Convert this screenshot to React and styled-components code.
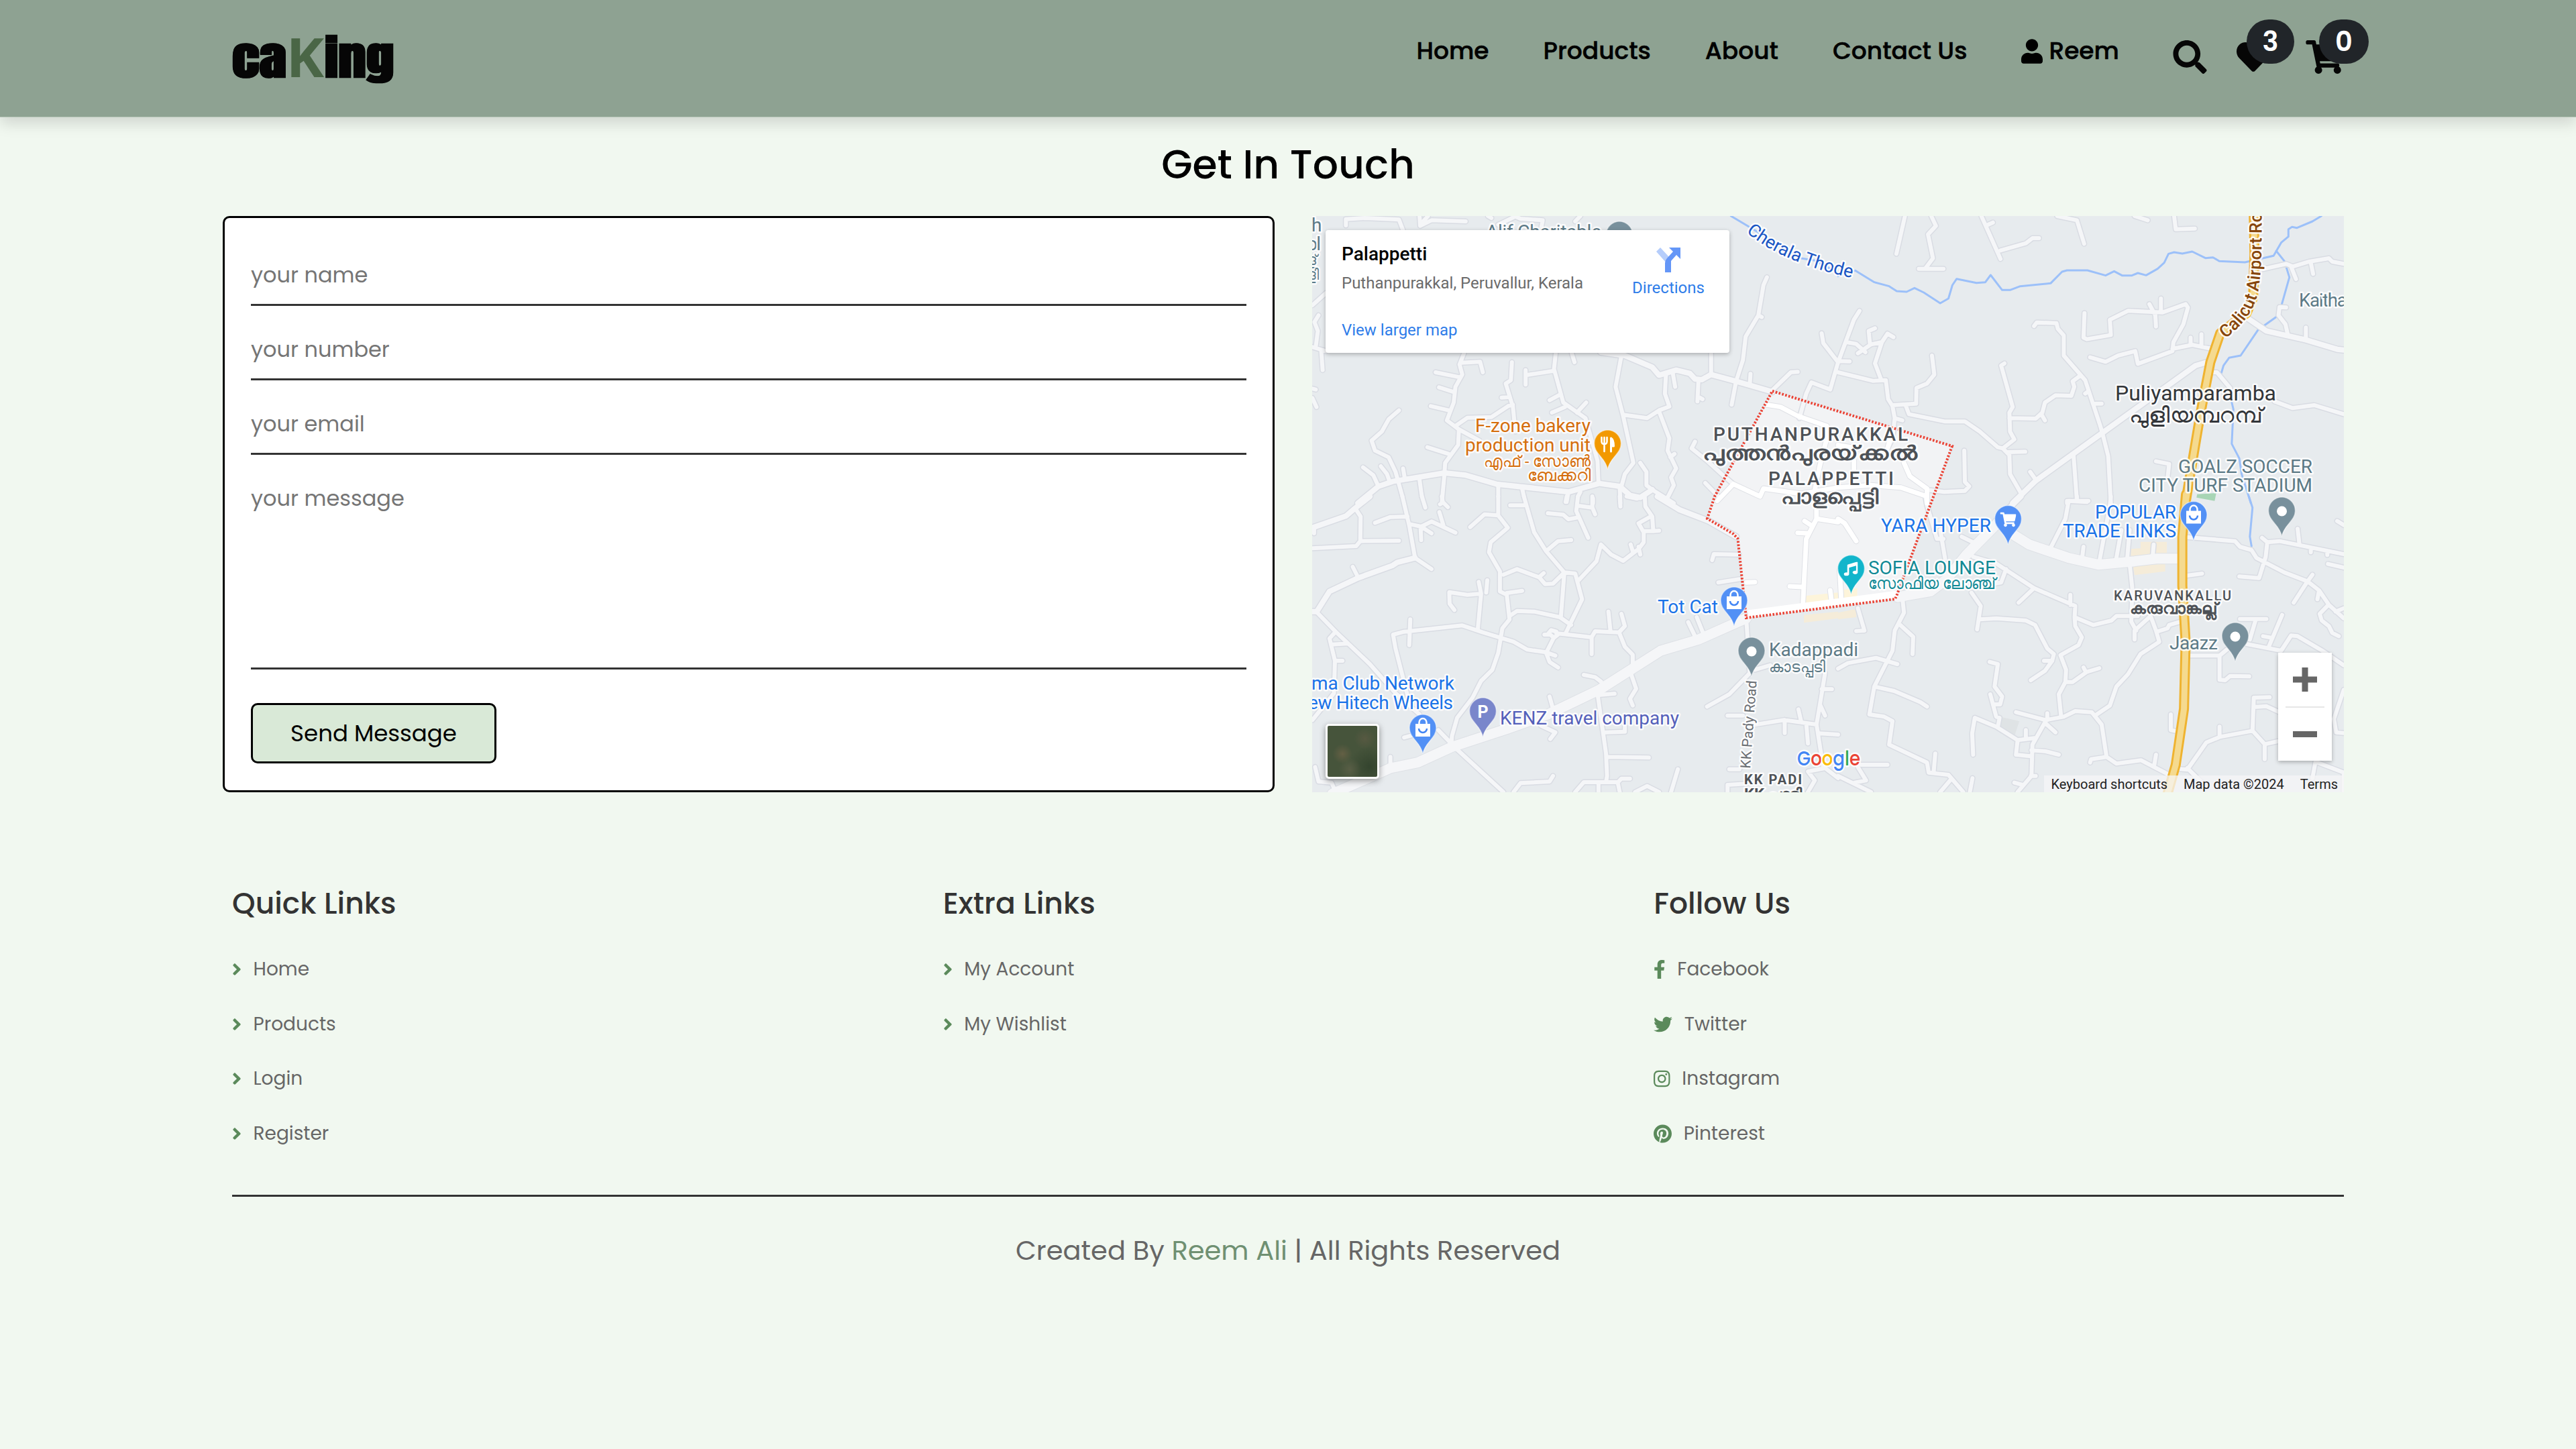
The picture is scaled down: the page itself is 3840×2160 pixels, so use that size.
import React from 'react';
import styled, { createGlobalStyle } from 'styled-components';
import {
  FaUser, FaSearch, FaHeart, FaShoppingCart, FaAngleRight, FaFacebookF,
  FaTwitter, FaInstagram, FaPinterest, FaMusic,
} from 'react-icons/fa';

const Global = createGlobalStyle`
  *, *::before, *::after { box-sizing: border-box; }
  body {
    margin: 0;
    background: #f1f8f0;
    color: #000;
    font-family: Poppins, Inter, "Open Sans", sans-serif;
    font-feature-settings: "cv11";
  }
  ul { list-style: none; margin: 0; padding: 0; }
  a { color: inherit; text-decoration: none; }
`;

const Page = styled.div`
  min-height: 2160px;
  display: flex;
  flex-direction: column;
`;

/* ---------- header ---------- */
const Header = styled.header`
  height: 175px;
  padding: 0 346px;
  display: flex;
  justify-content: space-between;
  align-items: flex-start;
  background: #8ea292;
  border-bottom: 1px solid #bccabd;
  box-shadow: 0 10px 20px rgba(0, 0, 0, 0.13);
`;
const Logo = styled.a`
  display: flex;
  align-items: baseline;
  padding-top: 34px;
  color: #060606;
`;
const LogoPart = styled.span`
  width: ${(p) => p.$w}px;
  font: 700 67px/100px Anton, Impact, sans-serif;
  -webkit-text-stroke: 0.6px #060606;
  transform: scaleX(1.24);
  transform-origin: left;
`;
const LogoK = styled.span`
  width: 54px;
  display: flex;
  justify-content: center;
  font: 700 80px/100px "Open Sans", sans-serif;
  color: #4a6646;
  transform: translateX(-2px) scaleX(1.06);
`;
const NavBar = styled.div`
  display: flex;
  align-items: flex-start;
`;
const Nav = styled.nav`
  display: flex;
  gap: 81px;
  padding: 49px 80px 0 0;
`;
const NavLink = styled.a`
  display: flex;
  align-items: center;
  gap: 9px;
  font-size: 36px;
  font-weight: 500;
  line-height: 54px;
  white-space: nowrap;
  -webkit-text-stroke: 0.5px #000;
`;
const UserIcon = styled(FaUser)`
  width: 32px;
  height: 37px;
`;
const Actions = styled.div`
  display: flex;
  gap: 44px;
  padding-top: 60px;
`;
const Action = styled.a`
  position: relative;
  display: flex;
  width: ${(p) => p.$w}px;
  height: 50px;
  margin-right: ${(p) => p.$gap || 0}px;
  color: #060606;
  svg { width: 100%; height: 50px; }
`;
const Badge = styled.span`
  position: absolute;
  left: ${(p) => p.$left}px;
  top: -31px;
  width: ${(p) => p.$w}px;
  height: 66px;
  border-radius: 33px;
  background: #212529;
  color: #fff;
  font-size: 40px;
  font-weight: 600;
  line-height: 66px;
  text-align: center;
`;

/* ---------- contact ---------- */
const Title = styled.h1`
  margin: 23px 0 0;
  height: 124px;
  font-size: 60px;
  font-weight: 500;
  line-height: 94px;
  text-align: center;
`;
const Contact = styled.section`
  display: flex;
  gap: 56px;
  height: 859px;
  padding-left: 332px;
`;
const Form = styled.form`
  width: 1568px;
  padding: 20px 39px 0;
  display: flex;
  flex-direction: column;
  align-items: flex-start;
  background: #fff;
  border: 3px solid #000;
  border-radius: 10px;
`;
const Field = styled.input`
  width: 100%;
  height: 111px;
  padding: 22px 0 0;
  border: 0;
  border-bottom: 3px solid #333;
  background: none;
  outline: none;
  font: inherit;
  font-size: 32px;
  &::placeholder { color: #757575; opacity: 1; }
`;
const Message = styled.textarea`
  width: 100%;
  height: 320px;
  padding: 41px 0 0;
  border: 0;
  border-bottom: 3px solid #333;
  background: none;
  outline: none;
  resize: none;
  font: inherit;
  font-size: 32px;
  &::placeholder { color: #757575; opacity: 1; }
`;
const Send = styled.button`
  width: 366px;
  height: 90px;
  margin-top: 50px;
  padding: 0;
  border: 3px solid #000;
  border-radius: 10px;
  background: #d9e9d7;
  color: #000;
  font: inherit;
  font-size: 34px;
`;

/* ---------- map ---------- */
const MapFrame = styled.div`
  position: relative;
  width: 1538px;
  height: 859px;
  overflow: hidden;
  background: #e7ebee;
  font-family: Roboto, sans-serif;
`;
const MapSvg = styled.svg`
  display: block;
  width: 1538px;
  height: 859px;
`;
const Label = styled.text`
  font-family: ${(p) => p.$family || 'Roboto, "Noto Sans"'}, sans-serif;
  font-size: ${(p) => p.$size || 28}px;
  font-weight: ${(p) => p.$weight || 400};
  fill: ${(p) => p.$color || '#1a73e8'};
  stroke: rgba(255, 255, 255, 0.85);
  stroke-width: 5px;
  stroke-linejoin: round;
  paint-order: stroke;
`;
const PlaceCard = styled.div`
  position: absolute;
  left: 20px;
  top: 21px;
  width: 602px;
  height: 183px;
  padding: 18px 24px;
  display: flex;
  justify-content: space-between;
  background: #fff;
  border-radius: 4px;
  box-shadow: 0 2px 6px rgba(0, 0, 0, 0.28);
`;
const PlaceInfo = styled.div`
  display: flex;
  flex-direction: column;
  white-space: nowrap;
`;
const PlaceName = styled.div`
  font-size: 28px;
  font-weight: 500;
  line-height: 36px;
`;
const PlaceAddress = styled.div`
  margin-top: 9px;
  font-size: 24px;
  line-height: 32px;
  color: #6b6b6b;
`;
const MapLink = styled.a`
  margin-top: ${(p) => p.$gap}px;
  font-size: 24px;
  line-height: 32px;
  color: #2f7de9;
`;
const Directions = styled.div`
  width: 110px;
  margin-right: 12px;
  padding-top: 7px;
  display: flex;
  flex-direction: column;
  align-items: center;
`;
const ZoomBox = styled.div`
  position: absolute;
  left: 1440px;
  top: 651px;
  width: 80px;
  height: 161px;
  display: flex;
  flex-direction: column;
  align-items: center;
  background: #fff;
  box-shadow: 0 2px 6px rgba(0, 0, 0, 0.28);
`;
const ZoomButton = styled.div`
  width: 58px;
  height: 80px;
  display: flex;
  align-items: center;
  justify-content: center;
  & + & { border-top: 2px solid #e6e6e6; }
`;
const Satellite = styled.div`
  position: absolute;
  left: 20px;
  top: 757px;
  width: 80px;
  height: 82px;
  border: 3px solid #fff;
  border-radius: 5px;
  box-shadow: 0 3px 10px rgba(0, 0, 0, 0.4);
  background:
    radial-gradient(circle at 30% 55%, rgba(112, 100, 72, 0.7), transparent 22%),
    radial-gradient(circle at 75% 25%, rgba(98, 92, 70, 0.6), transparent 20%),
    radial-gradient(circle at 45% 85%, rgba(100, 100, 76, 0.6), transparent 22%),
    radial-gradient(circle at 85% 80%, rgba(40, 58, 38, 0.6), transparent 35%),
    #46543b;
`;
const Attribution = styled.div`
  position: absolute;
  right: 0;
  bottom: 0;
  height: 25px;
  padding: 0 9px 0 11px;
  display: flex;
  gap: 24px;
  background: rgba(245, 246, 247, 0.75);
  color: #222;
  font-size: 20px;
  line-height: 27px;
  white-space: nowrap;
`;

const tiles = {
  nw: 'translate(1940 310) scale(0.5102 0.33333)',
  ne: 'translate(2740 310) scale(0.49107 0.33333)',
  sw: 'translate(1940 740) scale(0.5102 0.33333)',
  se: 'translate(2740 740) scale(0.49107 0.33333)',
};
const roads = [
  ['nw', 'M130 78L130 50L185 45L285 52L297 100M345 36L347 80L380 55L480 60M347 75L370 36M555 45L545 36M575 75L625 38L640 48L705 55L700 95M800 60L815 36M32 435L72 380M50 480L38 510L48 550L42 620M32 622L72 640M58 640L62 725M475 650L462 700L470 745L450 800L445 870L425 950L460 990L458 1060L420 1140L418 1185M468 692L522 688L530 735M392 735L465 758M402 802L447 824M378 886L430 905M368 1070L430 1100M32 808L42 812M32 850L44 890M285 905L255 945L235 1000L205 1040L215 1085L255 1115L275 1180L295 1290M180 1160L210 1195L225 1245M232 1155L250 1190L258 1225M297 1165L302 1210M345 1215L350 1270L352 1290M418 1190L410 1320L405 1325M575 1240V1290M645 1255L650 1290M780 1270L775 1315M815 1270L808 1290M852 1300V1320M930 1250L932 1320M743 650L738 720L765 870L830 940L865 1130L868 1230M738 728L655 748L655 790M655 748V725M615 690L612 770L597 785L618 890L625 1000M585 848L608 845M618 880L605 885L555 935L485 938L450 975M460 990L520 1040M755 835L725 860M770 890L732 915M805 915L832 870M790 650L798 690M935 660L918 800L940 930L970 1140L945 1190L935 1245M940 925L1010 940L1045 905L1075 888L1062 830L1065 748M1085 738L1092 800M1160 775L1157 865M1160 845L1172 855M1045 910L1075 1030L1070 1085L1095 1165L1080 1205L1088 1240L1070 1295M1090 1100L1078 1115M990 1140L1008 1180L1008 1240L1025 1260L1088 1320M1197 650V745M1360 310L1350 345L1335 480L1298 575L1290 680L1270 775L1257 880M1335 480L1345 488M1312 742L1310 790M1376 815L1430 735L1450 733M1520 560L1525 605L1568 690L1545 812L1490 780L1475 830L1455 940M1150 1045L1140 1075L1185 1130L1235 1200L1262 1235M1180 1230L1215 1285'],
  ['ne', 'M203 36L177 205M283 36L297 80L273 118L288 225L265 270M245 272L320 272M435 36L493 228M455 75L470 65M493 190L570 158L590 135L610 135M665 36L725 55L747 160M900 36L940 55M1020 36L1025 95L1083 92M65 460L48 500L0 690M0 685L35 686M25 600L55 608L83 645M60 650L100 610L133 600L150 562L168 578M133 600L112 695L130 765M112 538L93 550L97 612M0 735L105 773L145 770L152 855L165 885L172 940L165 1030L150 1075M172 940L195 950M165 882L237 875L238 805L270 785L292 745L285 660M205 882L215 922L325 955L385 955L430 1000L485 1070L500 1075L535 1035L522 1000L520 915L530 890L495 705L505 695M520 940L600 942L620 915L628 870L660 838L708 840L717 800L712 775L735 750M618 925L628 950M500 1075L520 1105L522 1190L555 1275M515 1092L568 1090M595 528L603 512L663 515L667 540L685 570L685 660L750 770L795 970L803 1010L820 1110L828 1320M760 820L750 830M782 875L800 875M715 1110L725 1310M695 1320V1310H760M583 1180L600 1215M748 470L745 580L755 587L828 568L825 500L880 460L985 467L1055 430L1062 445L1048 520L1018 600L1015 640L910 697L902 640L850 660L812 688L765 668M945 430L963 480L965 530M980 405V465M1015 630L1075 612L1135 630M1070 580V612M1103 565V615M1135 735L1150 735L1190 805M1285 275L1360 250L1380 262L1430 240L1490 225L1500 240L1535 250M1375 262L1390 318M1435 245L1442 295M1420 590V535M1360 445L1340 443L1337 480L1358 520L1365 565M1325 865L1380 895L1445 882L1535 922M383 1085L385 1225L398 1245L385 1265L322 1270L280 1262M965 1133L1005 1145L1000 1210'],
  ['sw', 'M160 60L173 90L172 200L160 222L32 232M172 200L285 198M37 165V140M295 0L315 130L332 275M45 518L100 605L200 750L275 880L345 975M165 360L150 315M332 275L380 325M215 118L260 92L310 90M320 125L350 135L380 112L450 162M348 135L350 195M355 140L380 165M403 70L415 130M352 0L362 50M410 0L413 25L428 48M575 0V85L603 140L553 205L548 250L580 335V425L600 440L608 550L587 590L575 700L558 775L525 825L500 900L455 990L440 1070L438 1105M575 85L535 80L493 137M590 350L630 325L695 362L712 392L735 390L765 345M695 360L708 343M600 432L645 422M650 0L680 160L715 245L768 340L800 345L820 460L772 612M610 40H650M715 245L750 200L788 195M768 345L758 540M608 535L630 512L680 515L755 540L788 575M775 0L772 25M808 0L803 65L838 185M810 42L850 50L858 80M850 0V45M720 75L765 82L780 102L805 95M930 0L932 45M950 0L980 10L1000 0M1003 0L1005 45L1025 90L1028 155L1000 155V205L985 235L940 288L905 260L875 215L862 290L810 375M1020 90L985 120L998 155M1028 155L1045 153M962 215L968 245M985 225L990 260M1200 285L1205 258L1278 260M1218 385L1280 370M268 618L300 605L470 577L530 608L620 650L660 685L715 697L742 712M318 550L315 665M268 620L275 680L310 890M515 600L525 435L518 382M525 435L485 440L432 428L433 480L447 508M543 375L540 430M745 612L848 630L858 603L928 608L945 580L935 525M903 603L897 515M848 630V705M928 608L945 672L968 708V745M710 618H725M722 612L730 598L745 605L748 620L738 632L722 612M738 630L715 700L725 740L750 765M1130 562L1150 625M1155 540L1172 605M825 798L858 808L875 828M960 780L978 860L960 905L968 935M865 880L890 1150L893 1250L890 1278M870 888L915 882M890 1055L945 1052V1030M895 1165L1015 1168M800 1322L825 1278L925 1278L935 1262H960M868 1280V1322M925 1285L930 1322M975 1322L1010 1295L1045 1322M1080 1322L1100 1220M620 1322L640 1282L725 1275L735 1250M725 895L735 950M700 1025L742 1055L727 1085M450 1125L590 1322M400 1045L438 1105M260 1165V1215M300 1078L320 1070M100 605L82 635L98 735L95 880L32 1000M90 662L135 658M98 735H120M40 1210L50 1275L88 1280L100 1322M1300 550L1310 790L1250 885L1185 940M1325 775L1370 755M1245 980H1290M1320 1022L1410 1000L1505 1020L1525 1215M1412 1000V1058M1530 790L1515 930L1505 1020M1515 930L1530 980M1452 952L1460 1005M1520 862H1550M1515 1060L1568 1065M1475 1015L1480 1105M1250 1220H1280M1245 1322V1290L1300 1285M1568 1260L1530 1215L1480 1230L1500 1270L1480 1322'],
  ['se', 'M265 0L270 40L300 190H320M310 150L325 280M375 180L410 205M410 270L480 300L595 410L720 490L718 540L775 575L830 555L845 535H910M595 410L548 475M705 485V440M718 540L720 580L740 630L730 665L675 710L692 775L690 830L670 885L677 985M405 430L433 490L422 595M430 550L480 545L570 555L598 575L635 680L655 705L650 735L628 780L585 822M650 735H625M510 325L495 385L475 390M690 830H712L755 785L793 768M752 785L745 765M195 450L200 520L172 600L165 690L110 850L95 975L140 985L165 1005L155 1110L270 1190L275 1235L335 1245L380 1322M60 500L80 600L55 602M185 570L228 628L226 705M0 770L30 745L115 722L180 750M110 850L170 870L250 920L270 940M290 1235L295 1150M310 1322L340 1270M400 1322L408 1260M0 1250L100 1322M60 1210L85 1270L50 1280M70 1200H150M460 740L485 750L475 850L498 895L492 930H470M462 885L480 985L490 990L485 1030M410 1155L407 1060L415 990L480 1030L545 1090L600 1080M540 965L630 1000L685 985L720 960L770 965L800 1020L815 1165L845 1195L920 1180L1005 1245M630 1005L590 1110L587 1250L545 1322M635 970V1000M630 1015L660 1055M587 1135L630 1140L670 1155M545 1090L540 1155L585 1162M570 1045V1085M600 1250H585M535 1280L560 1290M765 1190L768 1175L815 1165M960 1200L965 1155M785 975L825 935L845 850L880 795L918 705L975 650L965 600L950 540M885 300L893 410L890 560L905 600M945 540L900 600V640M968 605L1000 590L1005 575L1040 560M1010 975V1045L1028 1050M640 245L690 100L700 20L755 25M725 0V22M828 0L825 40L792 300M860 150L843 290M885 150L877 290M745 225L740 285M958 215L955 270M1425 380L1440 350M1425 380L1383 475M1460 420L1455 460M1287 185L1303 205L1298 270L1278 365L1218 358M1303 205L1340 200L1535 258M1400 210L1395 145M1435 235V250M1485 250V262M1515 110L1535 128M1487 302L1535 318M1485 490L1462 525L1468 555L1490 580L1500 610L1520 625M1510 515L1535 500M1058 182L1205 200L1220 225L1255 240L1270 275L1355 340L1425 380L1460 420L1490 485L1535 545M1055 355L1105 345M1065 712H1158L1180 685M1158 712V820L1175 822L1190 803L1248 805M1240 660L1345 690L1375 622L1395 625L1470 690L1535 755M1220 548H1300M1268 550L1250 640M1348 530L1308 670M1290 625L1315 632M1030 1218L1060 1222L1118 1100L1160 1075L1258 1048L1262 900L1310 898M1158 1030V1072M1262 942L1300 938L1340 965M1258 1048L1295 1108V1175M1295 1108L1335 1095M1060 1215L1105 1280M1535 865L1505 995L1512 1055L1535 1058M1455 1190L1535 1235V1322M1450 1180L1440 1260'],
];
const mediumRoads = [
  ['nw', 'M165 1320L225 1245L270 1222L418 1185L480 1195L570 1235L780 1270L870 1232L930 1245L960 1285L990 1295L1025 1260M875 645L945 660L1025 712L1045 748L1095 725L1135 740L1150 765L1170 768L1197 745L1270 775L1376 822'],
  ['ne', 'M530 1320L600 1220L803 1005L930 870L1085 705L1120 690M1245 495L1300 550L1420 590L1515 632L1535 635'],
  ['sw', 'M32 140L130 88L155 55L200 0M332 275L280 295L265 310L165 365L82 425L45 515L32 515M1040 0L1105 60L1190 110L1270 180'],
  ['se', 'M555 0L480 110'],
];
const mainRoads = [
  ['sw', 'M90 1330L260 1215L340 1190L440 1120L600 1040L720 975L870 865L1050 690L1160 640L1300 545'],
  ['se', 'M490 110L390 260L330 370L280 425L180 450M520 160L580 215L700 275L790 305L900 290L970 278L1040 278'],
];
const innerRoads = [
  ['nw', 'M1360 880L1400 890L1450 930L1535 975L1540 1000L1515 1150L1500 1260M1262 1235L1340 1290L1350 1255L1460 1278L1568 1250M1262 1235L1215 1310'],
  ['ne', 'M0 1060L60 1075M48 1130V1190M200 1140L218 1200L270 1255V1320M100 1240L190 1250L270 1290M0 1250L100 1240M165 1000L150 1075'],
  ['sw', 'M1505 50V100L1475 190L1465 490M1505 100L1568 115M1470 110L1490 130M1450 163L1480 165M1427 402L1463 405M1545 420L1550 480M1300 385L1325 383'],
  ['se', 'M0 100L20 120L55 200M5 330L10 470'],
];
const water = [
  ['nw', 'M1255 36L1320 95L1460 225L1500 235L1568 290'],
  ['ne', 'M0 305L52 280L110 332L155 350L178 372L208 375L232 358L260 378L310 426L335 405L347 345L360 317L420 335L447 332L463 300L498 367L522 367L553 350L645 337L680 285L695 279L757 279L812 302L838 283L862 302L892 302L910 291L935 301L970 272L990 245L1003 205L1020 198L1045 204L1075 195L1115 224L1138 221L1157 238L1235 243L1322 214L1345 155L1367 128L1367 95L1378 85L1393 89L1440 60L1467 36M1330 192L1355 238L1370 310L1347 430M1332 485L1275 545L1222 660L1187 670L1170 705L1163 740M1195 870L1200 900L1195 1055L1218 1120L1225 1190L1253 1320'],
  ['se', 'M1247 0L1258 50L1250 180L1255 222'],
];
const highway = [
  ['ne', 'M1262 30L1264 200L1260 400L1240 470L1160 560L1130 690L1100 920L1068 1200L1054 1325'],
  ['se', 'M1056 -10L1045 180L1045 400L1055 650L1050 950L1025 1200L1000 1330'],
];

function Lines({ data, color, width }) {
  return data.map(([tile, d]) => (
    <path key={tile} d={d} transform={tiles[tile]} fill="none" stroke={color}
      strokeWidth={width} strokeLinecap="round" strokeLinejoin="round"
      vectorEffect="non-scaling-stroke" />
  ));
}
function Shape({ tile, d, fill }) {
  return <path d={d} transform={tiles[tile]} fill={fill} />;
}

const bag = (
  <g>
    <path d="M-11 14h22v19h-22z" fill="#fff" />
    <path d="M-5.500 16v-4a5.500 6 0 0 1 11 0v4" fill="none" stroke="#fff" strokeWidth="2.500" />
    <path d="M-6 21a6 6 0 0 0 12 0" fill="none" stroke="#4285f4" strokeWidth="2.500" />
  </g>
);
const pinGlyphs = {
  dot: <circle cy="21" r="7.500" fill="#fff" />,
  food: (
    <g fill="none" stroke="#fff" strokeLinecap="round">
      <path d="M-9 11v6q0 4 4 4t4-4v-6M-5 11v21" strokeWidth="2.600" />
      <path d="M5 32V12q4 2 4 12h-4" strokeWidth="3" fill="#fff" strokeLinejoin="round" />
    </g>
  ),
  cart: <FaShoppingCart x="-12" y="9" size={24} color="#fff" />,
  music: <FaMusic x="-11" y="10" size={21} color="#fff" />,
  bag,
  parking: <text y="30" textAnchor="middle" fontSize="25" fontWeight="700" fill="#fff" fontFamily="Roboto, sans-serif">P</text>,
};
function Pin({ x, y, color, glyph }) {
  return (
    <g transform={`translate(${x} ${y})`}>
      <path d="M0 0C-11 0-20 9-20 20C-20 36-4 40 0 58.500C4 40 20 36 20 20C20 9 11 0 0 0Z" fill={color} stroke="rgba(255,255,255,.5)" strokeWidth="1.500" />
      {pinGlyphs[glyph]}
    </g>
  );
}

const slate = '#5c7a86';
const ink = '#4d5156';
const labels = [
  ['h', 1955, 345, 14, 28, slate],
  ['ol', 1948, 373, 21, 28, slate],
  ['ള്', 1948, 395, 16, 22, slate],
  ['ളി', 1948, 417, 18, 22, slate],
  ['Alif Charitable', 2215, 355, 172, 28, slate],
  ['F-zone bakery', 2199, 644, 172, 28, '#d56e0c'],
  ['production unit', 2184, 673, 187, 28, '#d56e0c'],
  ['എഫ് - സോൺ', 2212, 696, 159, 24, '#d56e0c'],
  ['ബേക്കറി', 2277, 717, 94, 24, '#d56e0c'],
  ['PUTHANPURAKKAL', 2554, 657, 290, 28, ink, 500],
  ['പുത്തൻപുരയ്\u200cക്കൽ', 2538, 686, 319, 30, ink, 700],
  ['PALAPPETTI', 2636, 723, 187, 28, ink, 500],
  ['പാളപ്പെട്ടി', 2655, 751, 146, 30, ink, 700],
  ['Kaitha', 3427, 457, 72, 28, slate],
  ['Puliyamparamba', 3153, 597, 240, 32, '#33363a'],
  ['പുളിയമ്പറമ്പ്', 3174, 630, 199, 31, '#33363a', 500],
  ['GOALZ SOCCER', 3247, 705, 200, 28, slate],
  ['CITY TURF STADIUM', 3188, 733, 259, 28, slate],
  ['YARA HYPER', 2804, 793, 164, 28],
  ['POPULAR', 3123, 773, 121, 28],
  ['TRADE LINKS', 3075, 801, 169, 28],
  ['SOFIA LOUNGE', 2785, 856, 190, 28, '#128a96'],
  ['സോഫിയ ലോഞ്ച്', 2785, 878, 190, 24, '#128a96'],
  ['KARUVANKALLU', 3151, 895, 175, 20, ink, 500],
  ['കരുവാങ്കല്ല്', 3175, 915, 131, 23, ink, 700],
  ['Jaazz', 3234, 968, 72, 28, slate],
  ['Tot Cat', 2471, 914, 90, 28],
  ['Kadappadi', 2637, 978, 133, 28, slate],
  ['കാടപ്പടി', 2637, 1002, 84, 23, slate],
  ['ma Club Network', 1955, 1028, 213, 28],
  ['ew Hitech Wheels', 1950, 1057, 216, 28],
  ['KENZ travel company', 2236, 1080, 267, 28, '#5460ba'],
  ['KK PADI', 2600, 1169, 86, 20, ink, 700],
  ['KK പാടി', 2600, 1190, 86, 20, ink, 700],
];
const pins = [
  [2414, 330, '#78909c', 'dot'],
  [2396.5, 641, '#f29900', 'food'],
  [2585, 875, '#5290f5', 'bag'],
  [2611, 950, '#78909c', 'dot'],
  [2121, 1065, '#5290f5', 'bag'],
  [2210.5, 1040, '#7986cb', 'parking'],
  [2993.5, 753.5, '#5290f5', 'cart'],
  [3270, 747.5, '#5290f5', 'bag'],
  [3401.5, 741, '#78909c', 'dot'],
  [2759.5, 827.5, '#12b5cb', 'music'],
  [3332, 928, '#78909c', 'dot'],
];
const boundary = 'M2642 583L2910 665L2828 886L2825 893L2603 921L2590.500 803L2584 796L2545 773L2556 740Z';

function AreaMap() {
  return (
    <MapSvg viewBox="1956 322 1538 859">
      <path d={boundary} fill="#f2f3f5" />
      <Shape tile="se" fill="#f5ecd9" d="M890 235L918 232V203H998V265L888 275ZM895 310L993 302V335L900 352ZM0 520L55 503V540L0 550Z" />
      <Shape tile="sw" fill="#f5ecd9" d="M1468 530L1568 515V545L1468 565Z" />
      <Shape tile="sw" fill="#fdf4da" d="M1470 445L1568 430V480L1470 490Z" />
      <Shape tile="se" fill="#fdf4da" d="M0 420L58 410V450L0 470Z" />
      <Shape tile="se" fill="#dfe3e5" d="M490 985L550 1005L535 1075L485 1040Z" />
      <Shape tile="ne" fill="#a8d5b5" d="M1090 1280L1148 1275L1143 1310L1088 1295Z" />
      <Lines data={water} color="#9cc0f9" width={3} />
      <Lines data={roads} color="#d9dce3" width={9} />
      <Lines data={mediumRoads} color="#d9dce3" width={11} />
      <Lines data={mainRoads} color="#dee1e6" width={17} />
      <Lines data={innerRoads} color="#dfe1e6" width={9} />
      <Lines data={roads} color="#f5f6f8" width={6} />
      <Lines data={mediumRoads} color="#f5f6f8" width={8} />
      <Lines data={mainRoads} color="#f5f6f8" width={15} />
      <Lines data={innerRoads} color="#ffffff" width={7} />
      <path d="M2606 915L2828 886" stroke="#fff" strokeWidth="11" fill="none" />
      <Lines data={highway} color="#efb330" width={15} />
      <Lines data={highway} color="#f5da8f" width={9} />
      <path d={boundary} fill="none" stroke="#ea4335" strokeWidth="4" strokeDasharray="2.600 2.400" />

      <path id="stream" d="M2603 346Q2664 398 2790 420" fill="none" />
      <path id="airport" d="M3317 505Q3358 474 3366 436C3372 400 3372 370 3371 240" fill="none" />
      <path id="pady" d="M2609 1146L2619 1010" fill="none" />
      <Label $color="#1a56c4" $size={27}><textPath href="#stream">Cherala Thode</textPath></Label>
      <Label $color="#86450b" $size={26} $weight={500}><textPath href="#airport">Calicut Airport Road</textPath></Label>
      <Label $color="#6a6e73" $size={21}><textPath href="#pady">KK Pady Road</textPath></Label>

      {labels.map(([text, x, y, w, size, color, weight]) => (
        <Label key={text} x={x} y={y} textLength={w}
          lengthAdjust={/[\u0d00-\u0d7f]/.test(text) ? 'spacingAndGlyphs' : 'spacing'}
          $size={size} $color={color} $weight={weight}>{text}</Label>
      ))}
      {pins.map(([x, y, color, glyph]) => (
        <Pin key={`${x}-${y}`} x={x} y={y} color={color} glyph={glyph} />
      ))}
      <Label x="2679" y="1141" textLength="94" lengthAdjust="spacingAndGlyphs" $size={31} $weight={500} $family="Poppins">
        <tspan fill="#4285f4">G</tspan><tspan fill="#ea4335">o</tspan><tspan fill="#fbbc04">o</tspan><tspan fill="#4285f4">g</tspan><tspan fill="#34a853">l</tspan><tspan fill="#ea4335">e</tspan>
      </Label>
    </MapSvg>
  );
}

/* ---------- footer ---------- */
const Footer = styled.footer`
  padding: 133px 346px 0;
`;
const Columns = styled.div`
  display: grid;
  grid-template-columns: repeat(3, 1fr);
  gap: 31px;
  height: 467px;
`;
const Column = styled.div`
  display: flex;
  flex-direction: column;
`;
const Heading = styled.h2`
  margin: 0 0 24px;
  font-size: 44px;
  font-weight: 500;
  line-height: 66px;
  color: #333;
`;
const FooterLink = styled.a`
  display: flex;
  align-items: center;
  gap: 17.5px;
  height: 81.7px;
  font-size: 28px;
  color: #666;
  svg {
    flex: none;
    width: ${(p) => p.$icon}px;
    height: 28px;
    color: #5b8a5b;
  }
`;
const Credit = styled.p`
  margin: 0;
  padding-top: 50px;
  border-top: 3px solid #333;
  font-size: 40px;
  line-height: 60px;
  text-align: center;
  color: #666;
`;
const Author = styled.span`
  color: #6f9072;
`;

const footerColumns = [
  ['Quick Links', [[FaAngleRight, 14, 'Home'], [FaAngleRight, 14, 'Products'], [FaAngleRight, 14, 'Login'], [FaAngleRight, 14, 'Register']]],
  ['Extra Links', [[FaAngleRight, 14, 'My Account'], [FaAngleRight, 14, 'My Wishlist']]],
  ['Follow Us', [[FaFacebookF, 17.5, 'Facebook'], [FaTwitter, 28, 'Twitter'], [FaInstagram, 24.5, 'Instagram'], [FaPinterest, 27, 'Pinterest']]],
];

export default function App() {
  return (
    <Page>
      <Global />
      <Header>
        <Logo><LogoPart $w={84}>ca</LogoPart><LogoK>K</LogoK><LogoPart $w={102}>ing</LogoPart></Logo>
        <NavBar>
          <Nav>
            <NavLink>Home</NavLink>
            <NavLink>Products</NavLink>
            <NavLink>About</NavLink>
            <NavLink>Contact Us</NavLink>
            <NavLink><UserIcon />Reem</NavLink>
          </Nav>
          <Actions>
            <Action $w={51}><FaSearch /></Action>
            <Action $w={50} $gap={9}><FaHeart /><Badge $left={15} $w={71}>3</Badge></Action>
            <Action $w={57}><FaShoppingCart /><Badge $left={20} $w={74}>0</Badge></Action>
          </Actions>
        </NavBar>
      </Header>

      <Title>Get In Touch</Title>
      <Contact>
        <Form>
          <Field placeholder="your name" />
          <Field placeholder="your number" />
          <Field placeholder="your email" />
          <Message placeholder="your message" />
          <Send type="button">Send Message</Send>
        </Form>
        <MapFrame>
          <AreaMap />
          <PlaceCard>
            <PlaceInfo>
              <PlaceName>Palappetti</PlaceName>
              <PlaceAddress>Puthanpurakkal, Peruvallur, Kerala</PlaceAddress>
              <MapLink $gap={38}>View larger map</MapLink>
            </PlaceInfo>
            <Directions>
              <svg width="38" height="38" viewBox="0 0 38 38">
                <path d="M1 7L7 1L20 15L16 24Z" fill="#b5cdfb" />
                <path d="M14 38V24Q14 20 17 17L26 7L20 1H37V18L31 12L23 21V38Z" fill="#6496f7" />
              </svg>
              <MapLink $gap={7}>Directions</MapLink>
            </Directions>
          </PlaceCard>
          <Satellite />
          <ZoomBox>
            <ZoomButton><svg width="36" height="36"><path d="M0 13.500h13.500V0h9v13.500H36v9H22.500V36h-9V22.500H0z" fill="#666" /></svg></ZoomButton>
            <ZoomButton><svg width="36" height="9"><path d="M0 0h36v9H0z" fill="#666" /></svg></ZoomButton>
          </ZoomBox>
          <Attribution><span>Keyboard shortcuts</span><span>Map data ©2024</span><span>Terms</span></Attribution>
        </MapFrame>
      </Contact>

      <Footer>
        <Columns>
          {footerColumns.map(([title, links]) => (
            <Column key={title}>
              <Heading>{title}</Heading>
              {links.map(([Icon, width, text]) => (
                <FooterLink key={text} $icon={width}><Icon />{text}</FooterLink>
              ))}
            </Column>
          ))}
        </Columns>
        <Credit>Created By <Author>Reem Ali</Author> | All Rights Reserved</Credit>
      </Footer>
    </Page>
  );
}
